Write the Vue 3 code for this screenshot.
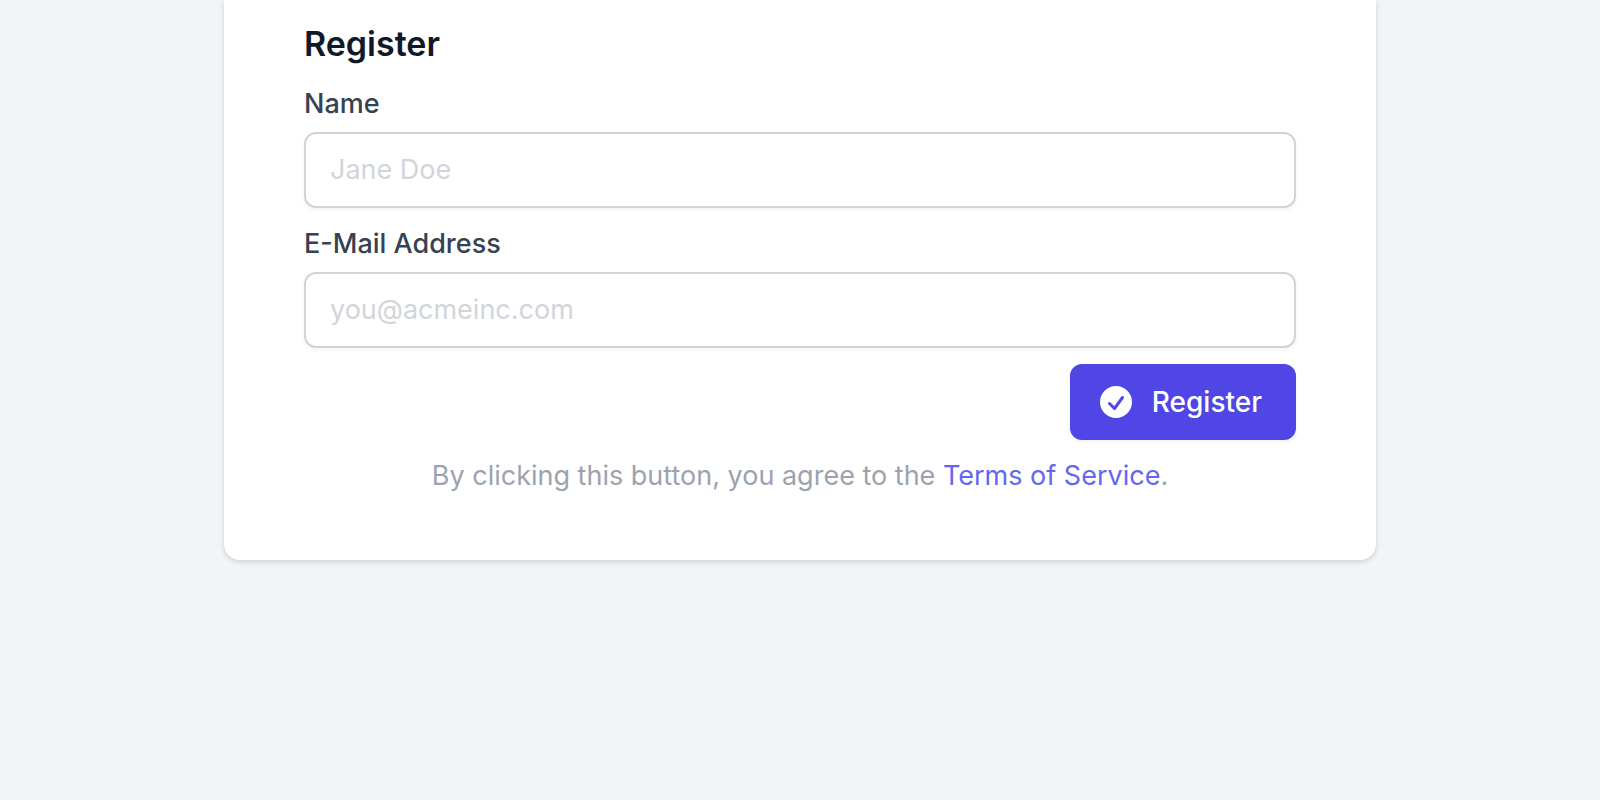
<script setup>
import { ref } from 'vue'

const name = ref('')
const email = ref('')
</script>

<template>
  <div class="page">
    <main class="card">
      <form class="form" @submit.prevent>
        <h1 class="title">Register</h1>

        <div class="field">
          <label for="name">Name</label>
          <input id="name" v-model="name" type="text" placeholder="Jane Doe" />
        </div>

        <div class="field">
          <label for="email">E-Mail Address</label>
          <input id="email" v-model="email" type="email" placeholder="you@acmeinc.com" />
        </div>

        <button class="submit" type="submit">
          <svg class="icon" viewBox="0 0 20 20" fill="currentColor" aria-hidden="true">
            <path
              fill-rule="evenodd"
              clip-rule="evenodd"
              d="M10 18a8 8 0 100-16 8 8 0 000 16zm3.857-9.809a.75.75 0 00-1.214-.882l-3.483 4.79-1.88-1.88a.75.75 0 10-1.06 1.061l2.5 2.5a.75.75 0 001.137-.089l4-5.5z"
            />
          </svg>
          Register
        </button>

        <p class="terms">
          By clicking this button, you agree to the <a href="#terms">Terms of Service</a>.
        </p>
      </form>
    </main>
  </div>
</template>

<style>
body {
  background: #f3f4f6;
}
</style>

<style scoped>
.page {
  min-height: 100vh;
  background: #f3f4f6;
}

.card {
  box-sizing: border-box;
  max-width: 1152px;
  margin: 0 auto;
  padding: 20px 80px 64px;
  border-radius: 0 0 16px 16px;
  background: #fff;
  box-shadow: 0 2px 6px rgba(0, 0, 0, 0.1), 0 2px 4px rgba(0, 0, 0, 0.06);
  font-family: Inter, "Liberation Sans", sans-serif;
  font-size: 27px;
  line-height: 40px;
}

.form {
  display: flex;
  flex-direction: column;
  gap: 16px;
}

.title {
  margin: 0;
  color: #111827;
  font-size: 34px;
  font-weight: 600;
  line-height: 48px;
}

.field {
  display: flex;
  flex-direction: column;
  gap: 8px;
}

label {
  color: #374151;
  font-weight: 550;
}

input {
  box-sizing: border-box;
  width: 100%;
  padding: 16px 24px;
  border: 2px solid #d1d5db;
  border-radius: 12px;
  background: #fff;
  box-shadow: 0 2px 4px rgba(0, 0, 0, 0.05);
  color: #111827;
  font: inherit;
}

input::placeholder {
  color: #d1d5db;
  opacity: 1;
}

.submit {
  display: flex;
  align-items: center;
  align-self: flex-end;
  gap: 16px;
  padding: 16px 32px 16px 24px;
  border: 2px solid #4f46e5;
  border-radius: 12px;
  background: #4f46e5;
  box-shadow: 0 2px 4px rgba(0, 0, 0, 0.05);
  color: #fff;
  font: inherit;
  font-size: 28px;
  font-weight: 550;
  cursor: pointer;
}

.icon {
  width: 40px;
  height: 40px;
}

.terms {
  margin: 0;
  color: #9ca3af;
  text-align: center;
}

.terms a {
  color: #6366f1;
  text-decoration: none;
}
</style>
